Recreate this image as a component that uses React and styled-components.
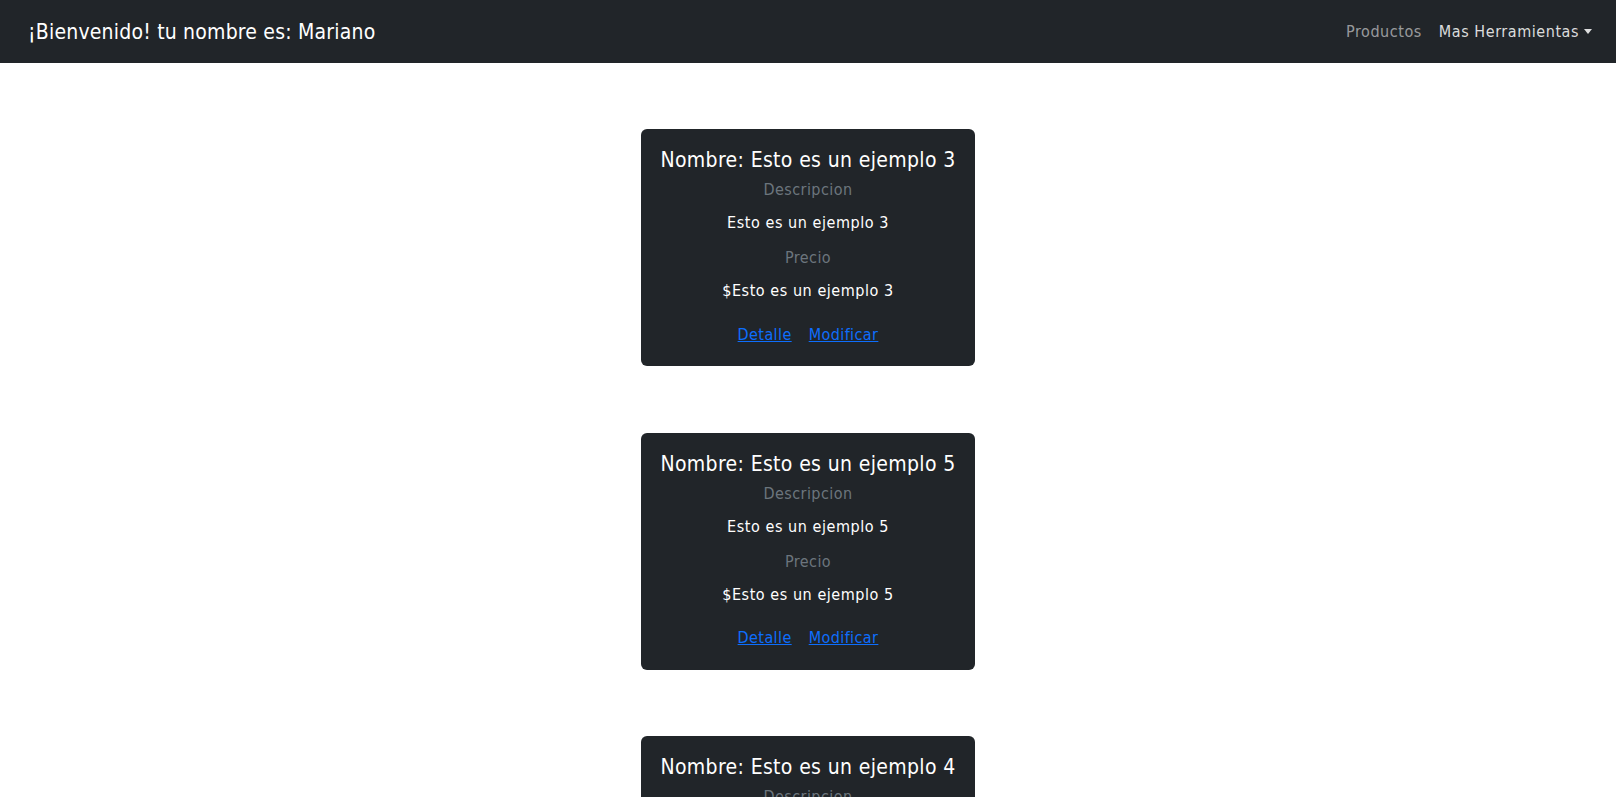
import React from "react";
import styled, { createGlobalStyle } from "styled-components";

const Global = createGlobalStyle`
  html, body { margin: 0; padding: 0; background: #fff; }
  body {
    font-family: "DejaVu Sans Condensed", "DejaVu Sans", Verdana, sans-serif;
    color: #212529;
    -webkit-font-smoothing: antialiased;
  }
  * { box-sizing: border-box; }
`;

const Navbar = styled.nav`
  height: 63px;
  background: #212529;
  display: flex;
  align-items: center;
  justify-content: space-between;
  padding: 0 24px 0 28px;
`;

const Brand = styled.a`
  color: #fff;
  font-size: 21px;
  letter-spacing: 0.2px;
  line-height: 30px;
  text-decoration: none;
`;

const NavList = styled.ul`
  list-style: none;
  margin: 0;
  padding: 0;
  display: flex;
  align-items: center;
  gap: 17px;
`;

const NavLink = styled.a`
  color: ${(p) => (p.$bright ? "rgba(255,255,255,0.85)" : "rgba(255,255,255,0.55)")};
  font-size: 16px;
  letter-spacing: 0.55px;
  line-height: 24px;
  text-decoration: none;
  display: flex;
  align-items: center;
`;

const Caret = styled.span`
  display: inline-block;
  margin-left: 5px;
  margin-top: -1px;
  width: 0;
  height: 0;
  border-top: 5px solid currentColor;
  border-left: 4px solid transparent;
  border-right: 4px solid transparent;
`;

const Main = styled.main`
  display: flex;
  flex-direction: column;
  align-items: center;
  gap: 66.5px;
  padding: 66px 0 40px;
`;

const Card = styled.div`
  width: 334px;
  background: #212529;
  border-radius: 6px;
  padding: 19px 10px 19.5px;
  display: flex;
  flex-direction: column;
  align-items: center;
  text-align: center;
`;

const Title = styled.h5`
  margin: 0;
  color: #fff;
  font-size: 21px;
  letter-spacing: 0.35px;
  font-weight: 400;
  line-height: 24px;
  white-space: nowrap;
`;

const Label = styled.h6`
  margin: ${(p) => p.$mt}px 0 0;
  color: #6c757d;
  font-size: 16px;
  letter-spacing: 0.45px;
  font-weight: 400;
  line-height: ${(p) => p.$lh}px;
`;

const Value = styled.p`
  margin: ${(p) => p.$mt}px 0 0;
  color: #fff;
  font-size: 16px;
  letter-spacing: 0.55px;
  line-height: 24px;
`;

const Links = styled.div`
  margin-top: 19.5px;
  display: flex;
  gap: 17px;
  line-height: 24px;
`;

const CardLink = styled.a`
  color: #0d6efd;
  font-size: 16px;
  letter-spacing: 0.4px;
  text-decoration: underline;
`;

const products = [
  { name: "Esto es un ejemplo 3", desc: "Esto es un ejemplo 3", price: "Esto es un ejemplo 3" },
  { name: "Esto es un ejemplo 5", desc: "Esto es un ejemplo 5", price: "Esto es un ejemplo 5" },
  { name: "Esto es un ejemplo 4", desc: "Esto es un ejemplo 4", price: "Esto es un ejemplo 4" },
];

export default function App() {
  return (
    <>
      <Global />
      <Navbar>
        <Brand href="#">¡Bienvenido! tu nombre es: Mariano</Brand>
        <NavList>
          <li><NavLink href="#">Productos</NavLink></li>
          <li>
            <NavLink href="#" $bright>
              Mas Herramientas<Caret />
            </NavLink>
          </li>
        </NavList>
      </Navbar>
      <Main>
        {products.map((p, i) => (
          <Card key={i}>
            <Title>Nombre: {p.name}</Title>
            <Label $mt={8} $lh={20}>Descripcion</Label>
            <Value $mt={11}>{p.desc}</Value>
            <Label $mt={11} $lh={24}>Precio</Label>
            <Value $mt={9}>${p.price}</Value>
            <Links>
              <CardLink href="#">Detalle</CardLink>
              <CardLink href="#">Modificar</CardLink>
            </Links>
          </Card>
        ))}
      </Main>
    </>
  );
}
